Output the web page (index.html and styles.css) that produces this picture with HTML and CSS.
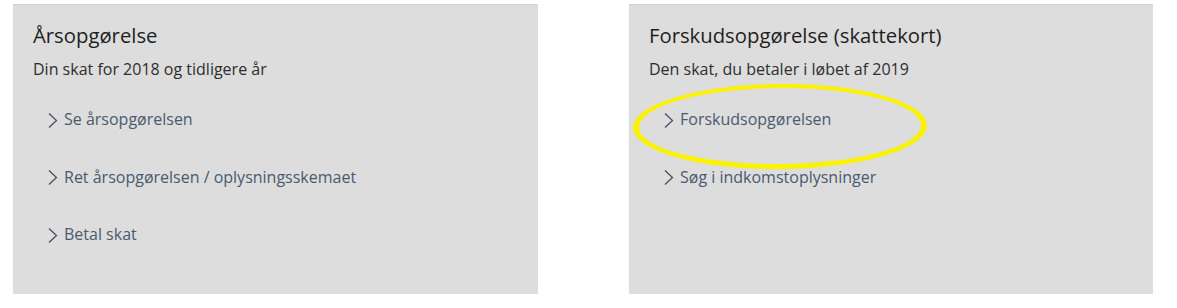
FILE: index.html
```html
<!DOCTYPE html>
<html lang="da">
<head>
<meta charset="utf-8">
<title>Skat</title>
<link rel="stylesheet" href="styles.css">
</head>
<body>
<div class="page">
  <section class="panel">
    <h2 class="title">Årsopgørelse</h2>
    <p class="subtitle">Din skat for 2018 og tidligere år</p>
    <ul class="links">
      <li><a href="#"><svg class="chev" width="10" height="17" viewBox="0 0 10 17"><polyline points="1,1.5 8.5,8.5 1,15.5" fill="none" stroke="#3f4a58" stroke-width="1.2"/></svg><span>Se årsopgørelsen</span></a></li>
      <li><a href="#"><svg class="chev" width="10" height="17" viewBox="0 0 10 17"><polyline points="1,1.5 8.5,8.5 1,15.5" fill="none" stroke="#3f4a58" stroke-width="1.2"/></svg><span>Ret årsopgørelsen / oplysningsskemaet</span></a></li>
      <li><a href="#"><svg class="chev" width="10" height="17" viewBox="0 0 10 17"><polyline points="1,1.5 8.5,8.5 1,15.5" fill="none" stroke="#3f4a58" stroke-width="1.2"/></svg><span>Betal skat</span></a></li>
    </ul>
  </section>
  <section class="panel panel-right">
    <h2 class="title">Forskudsopgørelse (skattekort)</h2>
    <p class="subtitle">Den skat, du betaler i løbet af 2019</p>
    <ul class="links">
      <li><a href="#"><svg class="chev" width="10" height="17" viewBox="0 0 10 17"><polyline points="1,1.5 8.5,8.5 1,15.5" fill="none" stroke="#3f4a58" stroke-width="1.2"/></svg><span>Forskudsopgørelsen</span></a></li>
      <li><a href="#"><svg class="chev" width="10" height="17" viewBox="0 0 10 17"><polyline points="1,1.5 8.5,8.5 1,15.5" fill="none" stroke="#3f4a58" stroke-width="1.2"/></svg><span>Søg i indkomstoplysninger</span></a></li>
    </ul>
    <div class="highlight"></div>
  </section>
</div>
</body>
</html>
```

FILE: styles.css
```css
html, body {
  margin: 0;
  padding: 0;
  background: #ffffff;
}

body {
  font-family: "Open Sans", "Noto Sans", "DejaVu Sans", sans-serif;
  width: 1177px;
  height: 308px;
  overflow: hidden;
}

.page {
  display: flex;
  gap: 91px;
  padding: 4px 0 0 13px;
}

.panel {
  position: relative;
  width: 525px;
  height: 290px;
  box-sizing: border-box;
  background: #dddddd;
  border-top: 1px solid #d2d2d2;
  padding: 16px 20px 0 20px;
}

.panel-right {
  width: 524px;
}

.title {
  margin: 0;
  font-size: 20.3px;
  line-height: 28px;
  font-weight: 400;
  color: #1e1e1e;
}

.subtitle {
  margin: 8px 0 0 0;
  font-size: 16px;
  line-height: 24px;
  color: #2e2e2e;
}

.links {
  list-style: none;
  margin: 26px 0 0 0;
  padding: 0 0 0 15px;
  display: flex;
  flex-direction: column;
  gap: 33.5px;
}

.links li {
  line-height: 24px;
}

.links a {
  display: flex;
  align-items: center;
  gap: 6px;
  text-decoration: none;
  color: #4a5a6e;
  font-size: 16px;
}

.chev {
  display: block;
  flex: none;
  margin-top: 2px;
}

.highlight {
  position: absolute;
  left: 4px;
  top: 79px;
  width: 294px;
  height: 85px;
  box-sizing: border-box;
  border-style: solid;
  border-color: #fbf200;
  border-width: 4px 6px 5px 6px;
  border-radius: 50%;
  transform: rotate(-0.4deg);
  pointer-events: none;
}
```
